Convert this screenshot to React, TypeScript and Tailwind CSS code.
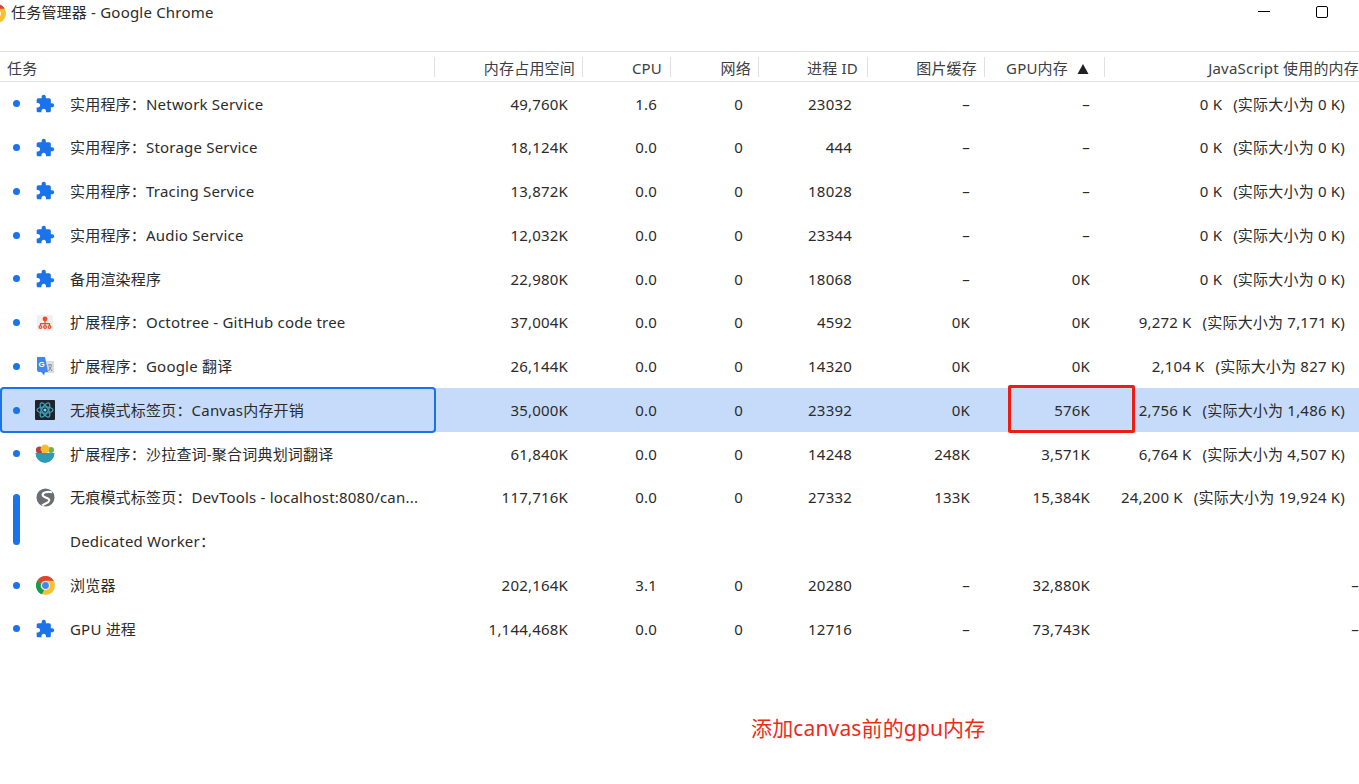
import React from 'react';

type Icon = 'puzzle' | 'octo' | 'gtrans' | 'react' | 'salad' | 'globe' | 'chrome' | 'none';

interface Row {
  icon: Icon;
  task: string;
  mem: string;
  cpu: string;
  net: string;
  pid: string;
  img: string;
  gpu: string;
  js: string;
  jsReal?: string;
}

const rows: Row[] = [
  { icon: 'puzzle', task: '实用程序：Network Service', mem: '49,760K', cpu: '1.6', net: '0', pid: '23032', img: '–', gpu: '–', js: '0 K', jsReal: '(实际大小为 0 K)' },
  { icon: 'puzzle', task: '实用程序：Storage Service', mem: '18,124K', cpu: '0.0', net: '0', pid: '444', img: '–', gpu: '–', js: '0 K', jsReal: '(实际大小为 0 K)' },
  { icon: 'puzzle', task: '实用程序：Tracing Service', mem: '13,872K', cpu: '0.0', net: '0', pid: '18028', img: '–', gpu: '–', js: '0 K', jsReal: '(实际大小为 0 K)' },
  { icon: 'puzzle', task: '实用程序：Audio Service', mem: '12,032K', cpu: '0.0', net: '0', pid: '23344', img: '–', gpu: '–', js: '0 K', jsReal: '(实际大小为 0 K)' },
  { icon: 'puzzle', task: '备用渲染程序', mem: '22,980K', cpu: '0.0', net: '0', pid: '18068', img: '–', gpu: '0K', js: '0 K', jsReal: '(实际大小为 0 K)' },
  { icon: 'octo', task: '扩展程序：Octotree - GitHub code tree', mem: '37,004K', cpu: '0.0', net: '0', pid: '4592', img: '0K', gpu: '0K', js: '9,272 K', jsReal: '(实际大小为 7,171 K)' },
  { icon: 'gtrans', task: '扩展程序：Google 翻译', mem: '26,144K', cpu: '0.0', net: '0', pid: '14320', img: '0K', gpu: '0K', js: '2,104 K', jsReal: '(实际大小为 827 K)' },
  { icon: 'react', task: '无痕模式标签页：Canvas内存开销', mem: '35,000K', cpu: '0.0', net: '0', pid: '23392', img: '0K', gpu: '576K', js: '2,756 K', jsReal: '(实际大小为 1,486 K)' },
  { icon: 'salad', task: '扩展程序：沙拉查词-聚合词典划词翻译', mem: '61,840K', cpu: '0.0', net: '0', pid: '14248', img: '248K', gpu: '3,571K', js: '6,764 K', jsReal: '(实际大小为 4,507 K)' },
  { icon: 'globe', task: '无痕模式标签页：DevTools - localhost:8080/can...', mem: '117,716K', cpu: '0.0', net: '0', pid: '27332', img: '133K', gpu: '15,384K', js: '24,200 K', jsReal: '(实际大小为 19,924 K)' },
  { icon: 'none', task: 'Dedicated Worker：', mem: '', cpu: '', net: '', pid: '', img: '', gpu: '', js: '' },
  { icon: 'chrome', task: '浏览器', mem: '202,164K', cpu: '3.1', net: '0', pid: '20280', img: '–', gpu: '32,880K', js: '–' },
  { icon: 'puzzle', task: 'GPU 进程', mem: '1,144,468K', cpu: '0.0', net: '0', pid: '12716', img: '–', gpu: '73,743K', js: '–' },
];

const headers = [
  { label: '内存占用空间', cls: 'w-[148px] pr-[7px]' },
  { label: 'CPU', cls: 'w-[88px] pr-[8px]' },
  { label: '网络', cls: 'w-[88px] pr-[7px]' },
  { label: '进程 ID', cls: 'w-[109px] pr-[9px]' },
  { label: '图片缓存', cls: 'w-[117px] pr-[7px]' },
];

function TaskIcon({ icon }: { icon: Icon }) {
  if (icon === 'puzzle') {
    return (
      <svg viewBox="0 0 24 24" className="h-[20px] w-[20px]" fill="#1a73e8">
        <path d="M20.5 11H19V7c0-1.1-.9-2-2-2h-4V3.5C13 2.12 11.88 1 10.5 1S8 2.12 8 3.5V5H4c-1.1 0-1.99.9-1.99 2v3.8H3.5c1.49 0 2.7 1.21 2.7 2.7s-1.21 2.7-2.7 2.7H2V20c0 1.1.9 2 2 2h3.8v-1.5c0-1.49 1.21-2.7 2.7-2.7 1.49 0 2.7 1.21 2.7 2.7V22H17c1.1 0 2-.9 2-2v-4h1.5c1.38 0 2.5-1.12 2.5-2.5S21.88 11 20.5 11z" />
      </svg>
    );
  }
  if (icon === 'octo') {
    return (
      <svg viewBox="0 0 16 16" className="h-[16px] w-[16px]">
        <rect width="16" height="16" rx="2" fill="#f1efee" />
        <circle cx="8" cy="4" r="2.4" fill="#ee4b2b" />
        <path d="M8 6v5M3.5 11V8.700h9V11" stroke="#ee4b2b" strokeWidth="1.200" fill="none" />
        <circle cx="3.500" cy="12" r="1.400" fill="#fbd5cc" stroke="#ee4b2b" strokeWidth="1.200" />
        <circle cx="8" cy="12" r="1.400" fill="#fbd5cc" stroke="#ee4b2b" strokeWidth="1.200" />
        <circle cx="12.500" cy="12" r="1.400" fill="#fbd5cc" stroke="#ee4b2b" strokeWidth="1.200" />
      </svg>
    );
  }
  if (icon === 'gtrans') {
    return (
      <svg viewBox="0 0 20 20" className="h-[20px] w-[20px]">
        <rect x="8" y="5" width="11" height="12" fill="#dadce0" />
        <path d="M13 9h4M15 8v1M13.500 15l3-5M14 10.500l3 4.500" stroke="#80868b" strokeWidth="1" fill="none" />
        <path d="M2 1h8l3 15H7l2 3-3-3H4a2 2 0 0 1-2-2z" fill="#4285f4" />
        <path d="M9.600 16l-.4 3.500L7 16z" fill="#3367d6" />
        <text x="3.600" y="11" fontSize="8" fontWeight="700" fill="#fff" fontFamily="Liberation Sans, sans-serif">G</text>
      </svg>
    );
  }
  if (icon === 'react') {
    return (
      <svg viewBox="0 0 20 20" className="h-[20px] w-[20px]">
        <rect width="20" height="20" rx="1" fill="#20232a" />
        <g fill="none" stroke="#3f9fb8" strokeWidth="1.300">
          <ellipse cx="10" cy="10" rx="8" ry="3.200" />
          <ellipse cx="10" cy="10" rx="8" ry="3.200" transform="rotate(60 10 10)" />
          <ellipse cx="10" cy="10" rx="8" ry="3.200" transform="rotate(120 10 10)" />
        </g>
        <circle cx="10" cy="10" r="1.600" fill="#61dafb" />
      </svg>
    );
  }
  if (icon === 'salad') {
    return (
      <svg viewBox="0 0 20 20" className="h-[20px] w-[20px]">
        <circle cx="4.500" cy="6" r="3.600" fill="#b5413f" />
        <circle cx="16" cy="6" r="3" fill="#6fb04b" />
        <circle cx="10" cy="5" r="4.400" fill="#f6bb2f" />
        <path d="M0.500 9h19a9.500 10 0 0 1-19 0z" fill="#2e9ab5" />
      </svg>
    );
  }
  if (icon === 'globe') {
    return (
      <svg viewBox="0 0 20 20" className="h-[19px] w-[19px]">
        <circle cx="10" cy="10" r="9.500" fill="#6a6e73" />
        <path d="M17 4.500C12 3.500 6.500 4.500 7 7.500S14.500 10 14 13 9 16 6.500 18.500" fill="none" stroke="#fff" strokeWidth="2.200" />
      </svg>
    );
  }
  if (icon === 'chrome') {
    return <ChromeLogo className="h-[19px] w-[19px]" />;
  }
  return null;
}

function ChromeLogo({ className }: { className: string }) {
  return (
    <svg viewBox="0 0 20 20" className={className}>
      <circle cx="10" cy="10" r="10" fill="#fbc02d" />
      <path d="M10 0a10 10 0 0 1 8.660 5H10a5 5 0 0 0-4.700 3.300L1.800 4.300A10 10 0 0 1 10 0z" fill="#db4437" />
      <path d="M1.800 4.300l3.500 4A5 5 0 0 0 8.500 15l-2.300 4.300A10 10 0 0 1 1.800 4.300z" fill="#0f9d58" />
      <circle cx="10" cy="10" r="4.600" fill="#fff" />
      <circle cx="10" cy="10" r="3.600" fill="#4285f4" />
    </svg>
  );
}

export default function App() {
  return (
    <div className="relative h-[784px] w-[1359px] overflow-hidden bg-white text-[15px] tracking-[0.2px] text-[#2b2b2b] [font-family:'Noto_Sans','Noto_Sans_CJK_SC',sans-serif]">
      {/* title bar */}
      <div className="flex h-[52px] border-b border-[#e0e0e0]">
        <div className="-ml-[13px] mt-[4px] h-[18px] w-[18px] shrink-0">
          <ChromeLogo className="h-[19px] w-[19px]" />
        </div>
        <span className="ml-[6px] leading-[24px]">任务管理器 - Google Chrome</span>
        <div className="ml-auto mr-[31px] flex items-start gap-[46px] pt-[6px]">
          <div className="mt-[5px] h-px w-[12px] bg-black" />
          <div className="h-[12px] w-[12px] rounded-[2px] border border-black" />
        </div>
      </div>

      {/* header */}
      <div className="flex h-[30px] items-center border-b border-[#e0e0e0] text-[#3c4043]">
        <div className="flex h-[20px] w-[435px] items-center border-r border-[#e0e0e0] pl-[7px] pt-[4px]">任务</div>
        {headers.map((h) => (
          <div key={h.label} className={`flex h-[20px] items-center justify-end border-r border-[#e0e0e0] pt-[4px] ${h.cls}`}>
            {h.label}
          </div>
        ))}
        <div className="flex h-[20px] w-[120px] items-center justify-end gap-[9px] border-r border-[#e0e0e0] pr-[15px] pt-[4px]">
          GPU内存
          <svg viewBox="0 0 12 10" className="h-[10px] w-[12px]" fill="#202124">
            <path d="M6 0l5.500 10H.5z" />
          </svg>
        </div>
        <div className="flex h-[20px] flex-1 items-center justify-end whitespace-nowrap pt-[4px]">JavaScript 使用的内存</div>
      </div>

      {/* rows */}
      <div className="relative mt-[0.1px]">
        {rows.map((r, i) => (
          <div key={i} className={`flex h-[43.75px] items-center whitespace-nowrap ${i === 7 ? 'bg-[#c6dbf9]' : ''}`}>
            <div className={`flex w-[436px] shrink-0 items-center ${i === 7 ? 'h-[46px] rounded-[4px] border-2 border-[#1a73e8]' : 'h-full'}`}>
              <div className={`flex w-[33px] shrink-0 justify-center ${i === 7 ? '-ml-[2px]' : ''}`}>
                {i !== 9 && i !== 10 && <div className="h-[7px] w-[7px] rounded-full bg-[#1a73e8]" />}
              </div>
              <div className="flex w-[24px] shrink-0 justify-center">
                <TaskIcon icon={r.icon} />
              </div>
              <div className="ml-[13px]">{r.task}</div>
            </div>
            <div className="w-[132px] shrink-0 text-right">{r.mem}</div>
            <div className="w-[89px] shrink-0 text-right">{r.cpu}</div>
            <div className="w-[86px] shrink-0 text-right">{r.net}</div>
            <div className="w-[109px] shrink-0 text-right">{r.pid}</div>
            <div className="w-[118px] shrink-0 text-right">{r.img}</div>
            <div className="w-[120px] shrink-0 text-right">{r.gpu}</div>
            <div className={`flex flex-1 justify-end ${r.js === '–' ? '' : 'pr-[14px]'}`}>
              <span>{r.js}</span>
              {r.jsReal && <span className="ml-[11px]">{r.jsReal}</span>}
            </div>
          </div>
        ))}
        {/* bar for the grouped process rows */}
        <div className="absolute left-[13px] top-[412px] h-[51px] w-[7px] rounded-full bg-[#1a73e8]" />
      </div>

      {/* annotations */}
      <div className="absolute left-[1008px] top-[385px] h-[48px] w-[127px] rounded-[2px] border-[3px] border-[#ee1c12]" />
      <div className="absolute left-[751px] top-[713px] text-[21px] leading-[30px] tracking-[0.15px] text-[#ee2a1b]">添加canvas前的gpu内存</div>
    </div>
  );
}
